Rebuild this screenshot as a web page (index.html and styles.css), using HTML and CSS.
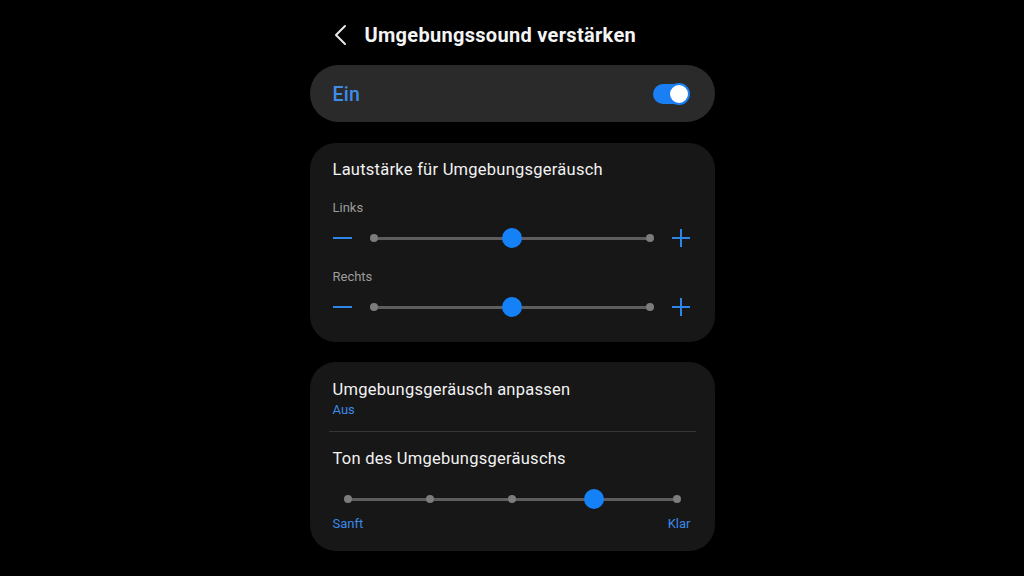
FILE: index.html
```html
<!DOCTYPE html>
<html lang="de">
<head>
<meta charset="utf-8">
<title>Umgebungssound verstärken</title>
<link rel="stylesheet" href="styles.css">
</head>
<body>
<div class="screen">
  <header class="header">
    <svg class="back" width="14" height="22" viewBox="0 0 14 22"><polyline points="11,2 2,11 11,20" fill="none" stroke="#e8e8e8" stroke-width="2" stroke-linecap="round" stroke-linejoin="round"/></svg>
    <h1 class="title">Umgebungssound verstärken</h1>
  </header>

  <div class="master">
    <span class="master-label">Ein</span>
    <span class="switch"><span class="switch-knob"></span></span>
  </div>

  <section class="card vol">
    <div class="card-title">Lautstärke für Umgebungsgeräusch</div>
    <div class="sub">Links</div>
    <div class="slider-row">
      <span class="minus"></span>
      <div class="track"><span class="dot dot-start"></span><span class="dot dot-end"></span><span class="knob" style="left:50%"></span></div>
      <span class="plus"></span>
    </div>
    <div class="sub">Rechts</div>
    <div class="slider-row">
      <span class="minus"></span>
      <div class="track"><span class="dot dot-start"></span><span class="dot dot-end"></span><span class="knob" style="left:50%"></span></div>
      <span class="plus"></span>
    </div>
  </section>

  <section class="card tone">
    <div class="item">
      <div class="card-title">Umgebungsgeräusch anpassen</div>
      <div class="status">Aus</div>
    </div>
    <div class="divider"></div>
    <div class="item item-tone">
      <div class="card-title">Ton des Umgebungsgeräuschs</div>
      <div class="step-track">
        <span class="dot" style="left:0%"></span>
        <span class="dot" style="left:25%"></span>
        <span class="dot" style="left:50%"></span>
        <span class="dot" style="left:100%"></span>
        <span class="knob" style="left:75%"></span>
      </div>
      <div class="step-labels"><span>Sanft</span><span>Klar</span></div>
    </div>
  </section>
</div>
</body>
</html>
```
FILE: styles.css
```css
* { box-sizing: border-box; }
html, body { margin: 0; padding: 0; background: #000; }
body {
  font-family: Roboto, "Noto Sans", "Liberation Sans", sans-serif;
  color: #f2f2f2;
  width: 1024px;
  height: 576px;
  overflow: hidden;
}
.screen {
  width: 405px;
  margin: 0 auto;
  padding-top: 12px;
}
.header {
  height: 46px;
  display: flex;
  align-items: center;
  margin-bottom: 7px;
  padding-left: 24px;
}
.back { display: block; margin-right: 17px; }
.title {
  margin: 0;
  font-size: 20px;
  font-weight: 700;
  color: #f4f4f4;
  letter-spacing: 0.3px;
}
.master {
  height: 57px;
  border-radius: 29px;
  background: #2a2a2a;
  display: flex;
  align-items: center;
  justify-content: space-between;
  padding: 2px 26px 0 23px;
  margin-bottom: 21px;
}
.master-label {
  font-size: 19.5px;
  font-weight: 500;
  color: #3f8de6;
  letter-spacing: 0.3px;
}
.switch {
  position: relative;
  width: 36px;
  height: 20px;
  margin-top: -2px;
  border-radius: 10px;
  background: #1a7ff2;
}
.switch-knob {
  position: absolute;
  right: -1px;
  top: -1px;
  width: 22px;
  height: 22px;
  border-radius: 50%;
  background: #fff;
  border: 2px solid #1a7ff2;
}
.card {
  background: #171717;
  border-radius: 26px;
}
.vol {
  padding: 16px 25px 23px 23px;
  margin-bottom: 20px;
}
.card-title {
  font-size: 16.5px;
  line-height: 22px;
  color: #f2f2f2;
  letter-spacing: 0.25px;
}
.sub {
  font-size: 13px;
  line-height: 16px;
  color: #9c9c9c;
  margin-top: 19px;
}
.vol .sub + .slider-row { margin-top: 10px; }
.vol .slider-row + .sub { margin-top: 19px; }
.slider-row {
  height: 24px;
  display: flex;
  align-items: center;
}
.minus {
  width: 19px;
  height: 2px;
  background: #2d86ea;
  margin-right: 18px;
}
.plus {
  position: relative;
  width: 18px;
  height: 18px;
  margin-left: 18px;
}
.plus::before, .plus::after {
  content: "";
  position: absolute;
  background: #2d86ea;
}
.plus::before { left: 0; right: 0; top: 8px; height: 2px; }
.plus::after { top: 0; bottom: 0; left: 8px; width: 2px; }
.track {
  position: relative;
  flex: 1;
  height: 8px;
  margin: 0 4px;
}
.track::before, .step-track::before {
  content: "";
  position: absolute;
  left: 0;
  right: 0;
  top: 50%;
  height: 3px;
  margin-top: -1.5px;
  background: #5e5e5e;
}
.dot {
  position: absolute;
  top: 50%;
  width: 8px;
  height: 8px;
  margin: -4px 0 0 -4px;
  border-radius: 50%;
  background: #7c7c7c;
}
.dot-start { left: 0; }
.dot-end { left: 100%; }
.knob {
  position: absolute;
  top: 50%;
  width: 20px;
  height: 20px;
  margin: -10px 0 0 -10px;
  border-radius: 50%;
  background: #1581f6;
}
.tone { padding-bottom: 19px; }
.item { padding: 17px 24px 13px 23px; }
.status {
  font-size: 13px;
  line-height: 16px;
  color: #3a89e8;
  margin-top: 1px;
}
.divider {
  height: 1px;
  background: #363636;
  margin: 0 19px;
}
.item-tone { padding: 16px 24px 0 23px; }
.step-track {
  position: relative;
  height: 20px;
  margin: 19px 14px 0 15px;
}
.step-labels {
  display: flex;
  justify-content: space-between;
  font-size: 13px;
  line-height: 16px;
  color: #3a89e8;
  margin-top: 7px;
}
```
